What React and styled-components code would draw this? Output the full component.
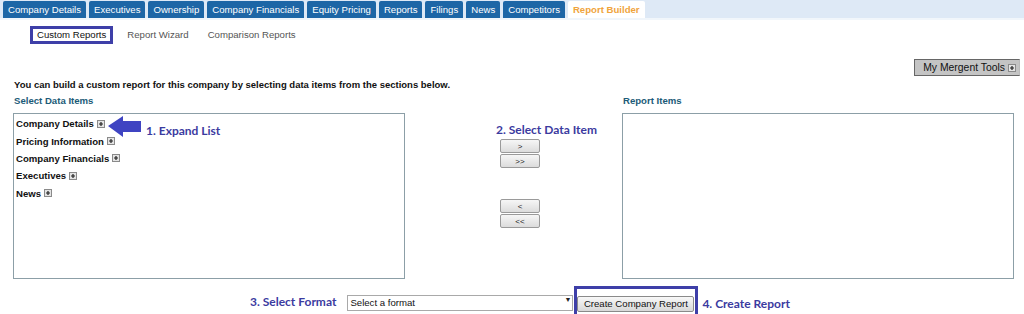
import React, { useState } from 'react';
import styled, { createGlobalStyle } from 'styled-components';

const Global = createGlobalStyle`
body {
  margin: 0;
  background: #fff;
  font-family: 'Liberation Sans', Arial, sans-serif;
}
`

const Page = styled.div`
width: 1024px;
height: 314px;
overflow: hidden;
`
const TabBar = styled.div`
display: flex;
align-items: flex-end;
gap: 3px;
height: 18px;
padding-left: 3px;
background: #dee9f6;
border-bottom: 2px solid #f1f6fb;
`
const Tab = styled.div`
height: 17px;
padding: 0 5px;
display: flex;
align-items: center;
font-size: 9.6px;
color: ${p => (p.active ? '#f0a43c' : '#fff')};
font-weight: ${p => (p.active ? 'bold' : 'normal')};
background: ${p => (p.active ? '#fff' : '#1d66a6')};
border-radius: 2px 2px 0 0;
`
const SubNav = styled.div`
display: flex;
align-items: center;
margin: 6px 0 0 30px;
height: 18px;
`
const SubLink = styled.div`
font-size: 9.6px;
color: ${p => (p.active ? '#111' : '#555')};
margin-right: ${p => (p.active ? 14 : 19)}px;
padding: ${p => (p.active ? '0 4px' : '0')};
height: 12px;
line-height: 12px;
border: ${p => (p.active ? '3px solid #3e3fa8' : 'none')};
`
const ToolsRow = styled.div`
display: flex;
justify-content: flex-end;
padding-right: 4px;
margin-top: 15px;
`
const ToolsButton = styled.div`
display: flex;
align-items: center;
gap: 3px;
height: 15px;
padding: 0 3px 0 8px;
background: #c4c4c4;
border: 1px solid #666;
border-right-color: #bbb;
font-size: 10.4px;
color: #111;
`
const Main = styled.div`
padding: 0 10px 0 13px;
`
const Intro = styled.div`
font-size: 9.5px;
line-height: 12px;
font-weight: bold;
color: #111;
margin: 3px 0 0 1px;
`
const Grid = styled.div`
display: grid;
grid-template-columns: 392px 1fr 392px;
`
const Heading = styled.div`
font-size: 9.6px;
line-height: 12px;
font-weight: bold;
color: #1c5b78;
margin: 4px 0 6px 1px;
`
const ListBox = styled.div`
position: relative;
box-sizing: border-box;
height: 166px;
border: 1px solid #8c9fa7;
padding: 1px 2px;
`
const Item = styled.div`
display: flex;
align-items: center;
gap: 3px;
height: 17.4px;
font-size: 9.6px;
font-weight: bold;
color: #111;
`
const Middle = styled.div`
display: flex;
flex-direction: column;
align-items: flex-start;
padding: 31px 0 0 91px;
`
const Note = styled.div`
font-family: 'Lato', 'Open Sans', sans-serif;
font-weight: bold;
font-size: 12px;
color: #3b3b9f;
white-space: nowrap;
margin: ${p => p.offset || '0'};
`
const MoveButton = styled.button`
width: 40px;
height: 14px;
margin: ${p => p.gap || 0}px 0 0 4px;
padding: 0;
font-family: 'Liberation Sans', Arial, sans-serif;
font-size: 8px;
color: #222;
background: linear-gradient(#f6f6f6, #dcdcdc);
border: 1px solid #9a9a9a;
border-radius: 2px;
`
const Pointer = styled.div`
position: absolute;
left: 94px;
top: 2px;
display: flex;
align-items: flex-end;
gap: 5px;
`
const Bottom = styled.div`
display: flex;
align-items: center;
padding-left: 237px;
margin-top: 7px;
`
const SelectWrap = styled.div`
position: relative;
margin-left: 11px;
`
const Select = styled.select`
appearance: none;
width: 226px;
height: 16px;
padding: 0 0 0 2px;
font-family: 'Liberation Sans', Arial, sans-serif;
font-size: 9.6px;
color: #111;
background: #fff;
border: 1px solid #a9a9a9;
border-radius: 0;
outline: none;
`
const Caret = styled.span`
position: absolute;
right: 2px;
top: 4px;
font-size: 7px;
color: #222;
pointer-events: none;
`
const Highlight = styled.div`
margin-left: 1px;
padding: 4px 1px 2px 0;
border: 3px solid #3e3fa8;
`
const CreateButton = styled.button`
width: 117px;
height: 16px;
padding: 0;
font-family: 'Liberation Sans', Arial, sans-serif;
font-size: 9.6px;
color: #111;
background: linear-gradient(#f8f8f8, #d8d8d8);
border: 1px solid #8a8a8a;
border-radius: 2px;
`

const Plus = () => (
  <svg width="8" height="8" viewBox="0 0 8 8">
    <rect x="0.5" y="0.5" width="7" height="7" fill="#e4e4e4" stroke="#8a8a8a" />
    <path d="M2 4h4M4 2v4" stroke="#222" strokeWidth="1.2" />
  </svg>
)

const Arrow = () => (
  <svg width="33" height="21" viewBox="0 0 33 21">
    <path d="M0 10 L15 0 L15 5 L33 5 L33 16 L15 16 L15 21 Z" fill="#3f44c2" />
  </svg>
)

const tabs = ['Company Details', 'Executives', 'Ownership', 'Company Financials', 'Equity Pricing', 'Reports', 'Filings', 'News', 'Competitors'];
const sections = ['Company Details', 'Pricing Information', 'Company Financials', 'Executives', 'News'];

const App = () => {
  const [format, setFormat] = useState('');

  return (
    <Page>
      <Global />
      <TabBar>
        {tabs.map(t => <Tab key={t}>{t}</Tab>)}
        <Tab active>Report Builder</Tab>
      </TabBar>
      <SubNav>
        <SubLink active>Custom Reports</SubLink>
        <SubLink>Report Wizard</SubLink>
        <SubLink>Comparison Reports</SubLink>
      </SubNav>
      <ToolsRow>
        <ToolsButton>My Mergent Tools <Plus /></ToolsButton>
      </ToolsRow>
      <Main>
        <Intro>You can build a custom report for this company by selecting data items from the sections below.</Intro>
        <Grid>
          <div>
            <Heading>Select Data Items</Heading>
            <ListBox>
              {sections.map(s => <Item key={s}>{s} <Plus /></Item>)}
              <Pointer>
                <Arrow />
                <Note offset="0 0 -1px 0">1. Expand List</Note>
              </Pointer>
            </ListBox>
          </div>
          <Middle>
            <Note>2. Select Data Item</Note>
            <MoveButton gap={2}>&gt;</MoveButton>
            <MoveButton gap={1}>&gt;&gt;</MoveButton>
            <MoveButton gap={31}>&lt;</MoveButton>
            <MoveButton gap={1}>&lt;&lt;</MoveButton>
          </Middle>
          <div>
            <Heading>Report Items</Heading>
            <ListBox />
          </div>
        </Grid>
        <Bottom>
          <Note>3. Select Format</Note>
          <SelectWrap>
            <Select value={format} onChange={e => setFormat(e.target.value)}>
              <option value="">Select a format</option>
              <option value="pdf">PDF</option>
              <option value="xls">Excel</option>
            </Select>
            <Caret>▼</Caret>
          </SelectWrap>
          <Highlight>
            <CreateButton>Create Company Report</CreateButton>
          </Highlight>
          <Note offset="5px 0 0 4px">4. Create Report</Note>
        </Bottom>
      </Main>
    </Page>
  );
}

export default App;
